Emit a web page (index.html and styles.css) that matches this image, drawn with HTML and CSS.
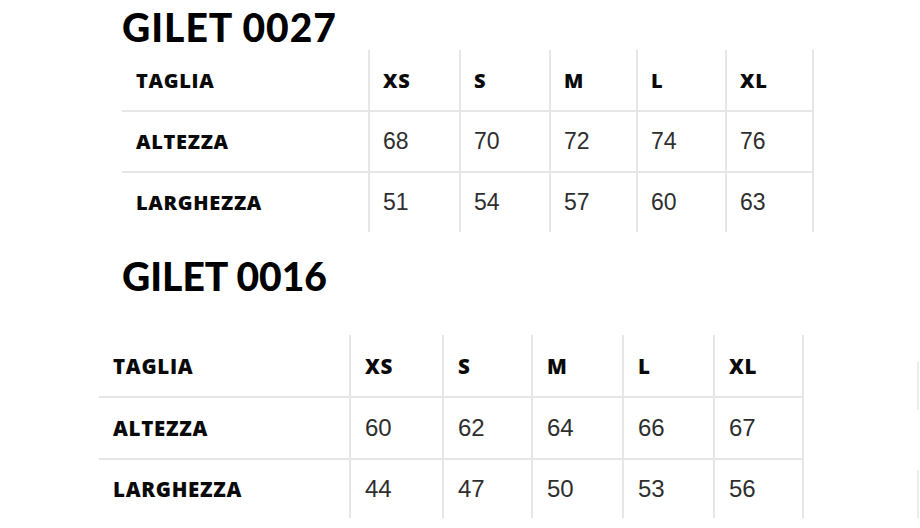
FILE: index.html
```html
<!DOCTYPE html>
<html lang="it">
<head>
<meta charset="utf-8">
<title>Guida taglie gilet</title>
<link rel="stylesheet" href="styles.css">
</head>
<body>
<main class="page">
  <section class="chart chart--a">
    <h2 class="chart-title">GILET 0027</h2>
    <div class="size-grid size-grid--a">
      <div class="cell head label">TAGLIA</div>
      <div class="cell head">XS</div>
      <div class="cell head">S</div>
      <div class="cell head">M</div>
      <div class="cell head">L</div>
      <div class="cell head last">XL</div>

      <div class="cell label row">ALTEZZA</div>
      <div class="cell row">68</div>
      <div class="cell row">70</div>
      <div class="cell row">72</div>
      <div class="cell row">74</div>
      <div class="cell row last">76</div>

      <div class="cell label row">LARGHEZZA</div>
      <div class="cell row">51</div>
      <div class="cell row">54</div>
      <div class="cell row">57</div>
      <div class="cell row">60</div>
      <div class="cell row last">63</div>
    </div>
  </section>

  <section class="chart chart--b">
    <h2 class="chart-title">GILET 0016</h2>
    <div class="size-grid size-grid--b">
      <div class="cell head label">TAGLIA</div>
      <div class="cell head">XS</div>
      <div class="cell head">S</div>
      <div class="cell head">M</div>
      <div class="cell head">L</div>
      <div class="cell head last">XL</div>

      <div class="cell label row">ALTEZZA</div>
      <div class="cell row">60</div>
      <div class="cell row">62</div>
      <div class="cell row">64</div>
      <div class="cell row">66</div>
      <div class="cell row last">67</div>

      <div class="cell label row">LARGHEZZA</div>
      <div class="cell row">44</div>
      <div class="cell row">47</div>
      <div class="cell row">50</div>
      <div class="cell row">53</div>
      <div class="cell row last">56</div>
    </div>
  </section>
</main>
</body>
</html>
```
FILE: styles.css
```css
* { box-sizing: border-box; }

html, body {
  margin: 0;
  padding: 0;
  background: #ffffff;
}

.page {
  position: relative;
  width: 920px;
  height: 528px;
  overflow: hidden;
  font-family: "Liberation Sans", Arial, sans-serif;
}

.chart-title {
  margin: 0;
  padding-left: 122px;
  font-family: Lato, "Open Sans", sans-serif;
  font-weight: 900;
  font-size: 39px;
  line-height: 39px;
  color: #000;
  letter-spacing: 1px;
}

.chart--a .chart-title { margin-top: 8px; }
.chart--a .size-grid { margin-top: 3px; margin-left: 122px; }

.chart--b .chart-title { margin-top: 25px; letter-spacing: 0; }
.chart--b .size-grid { margin-top: 39px; margin-left: 99px; }

.size-grid {
  display: grid;
}

.size-grid--a {
  grid-template-columns: 246px 91px 90px 87px 89px 89px;
  grid-template-rows: 60px 61px 61px;
  width: 692px;
}

.size-grid--b {
  grid-template-columns: 250px 93px 89px 91px 91px 91px;
  grid-template-rows: 61px 62px 60px;
  width: 705px;
}

.cell {
  display: flex;
  align-items: center;
  padding-left: 13px;
  border-left: 2px solid #e6e6e6;
  font-size: 23px;
  color: #2e2e2e;
}

.size-grid--b .cell { font-size: 24px; padding-left: 14px; }

.cell.label {
  border-left: none;
  padding-left: 14px;
}

.cell.row { border-top: 2px solid #e6e6e6; }
.cell.last { border-right: 2px solid #e6e6e6; }

.cell.head,
.cell.label {
  font-family: "Open Sans", Inter, sans-serif;
  font-weight: 800;
  font-size: 20px;
  color: #0a0a0a;
  letter-spacing: 0.7px;
}

.size-grid--b .cell.head,
.size-grid--b .cell.label { font-size: 20.5px; }

.chart--b { position: relative; }

.chart--b::after {
  content: "";
  position: absolute;
  right: 1px;
  bottom: 0;
  width: 2px;
  height: 48px;
  background: #ececec;
}

.chart--b::before {
  content: "";
  position: absolute;
  right: 1px;
  top: 105px;
  width: 2px;
  height: 48px;
  background: #ececec;
}
```
